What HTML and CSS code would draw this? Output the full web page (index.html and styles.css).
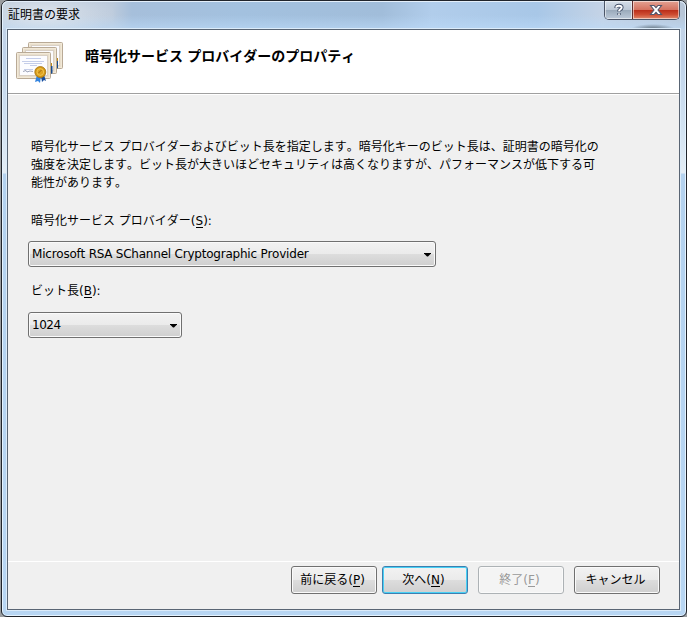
FILE: index.html
```
<!DOCTYPE html>
<html lang="ja">
<head>
<meta charset="utf-8">
<title>証明書の要求</title>
<link rel="stylesheet" href="styles.css">
</head>
<body>
<div class="window">
  <div class="titlebar">
    <div class="title">証明書の要求</div>
    <div class="controls">
      <div class="control help">
        <svg width="14" height="14" viewBox="0 0 14 14"><path d="M4.3 5V4.3Q4.3 2.7 7 2.7T9.7 4.5Q9.7 5.6 8.3 6.3Q7 7 7 8.4M7 10.2V11.8" fill="none" stroke="#46536b" stroke-width="3.8"/><path d="M4.3 4.8V4.3Q4.3 2.7 7 2.7T9.7 4.5Q9.7 5.6 8.3 6.3Q7 7 7 8.2M7 10.4V11.8" fill="none" stroke="#fff" stroke-width="1.9"/></svg>
      </div>
      <div class="control close">
        <svg width="14" height="12" viewBox="0 0 14 12"><path d="M1.5 1.5H5L7 3.7 9 1.5H12.5L9 6 12.5 10.5H9L7 8.3 5 10.5H1.5L5 6Z" fill="#fff" stroke="#53566b" stroke-width="1.1"/></svg>
      </div>
    </div>
  </div>
  <div class="client">
    <header class="header">
      <svg class="certs" width="48" height="44" viewBox="0 0 48 44">
        <defs>
          <g id="sheet">
            <rect x=".5" y=".5" width="34" height="26" rx="1" fill="#e9dfcc" stroke="#b9aa96"/>
            <rect x="1.5" y="1.5" width="32" height="24" fill="none" stroke="#faf3e5" stroke-dasharray="1 1"/>
            <rect x="3.5" y="3.5" width="28" height="20" fill="#fcfcff" stroke="#d9d0c5"/>
          </g>
          <g id="tails"><path d="M21 24L19 31 22 30 24 32 25 25Z" fill="#3283df"/><path d="M25 25L26 31 28 29 30 30 28 24Z" fill="#164d9e"/></g>
        </defs>
        <use href="#sheet" x="12" y="1"/>
        <path d="M40.5 19H42V27L40.5 28Z" fill="#174a8d"/>
        <use href="#sheet" x="6" y="6"/>
        <path d="M35 25H36.5V32L35 33Z" fill="#174a8d"/><path d="M35 22H36V25H35ZM41 17H42V20H41Z" fill="#bc891c"/>
        <use href="#sheet" x="0" y="11"/>
        <path d="M10 17.5H25M6 20.5H28M8 22.5H26M14 24.5H21M8 28.5H17" stroke="#9aa9d9" stroke-width=".7" opacity=".8"/>
        <path d="M7 30.5L10 29.5 11 31 14 30 17 30.5" fill="none" stroke="#77809b" stroke-width=".7"/>
        <use href="#tails" y="10"/>
        <circle cx="24.3" cy="31" r="5.5" fill="#d39918" stroke="#a8720b" stroke-width=".8"/>
        <circle cx="24.3" cy="31" r="3.4" fill="#dfa321" stroke="#f6cd5a" stroke-width=".8"/>
        <path d="M22.5 32L25.5 29" stroke="#9e6a0d"/>
      </svg>
      <h1>暗号化サービス プロバイダーのプロパティ</h1>
    </header>
    <main class="content">
      <p class="description">暗号化サービス プロバイダーおよびビット長を指定します。暗号化キーのビット長は、証明書の暗号化の<br>強度を決定します。ビット長が大きいほどセキュリティは高くなりますが、パフォーマンスが低下する可<br>能性があります。</p>
      <div class="label provider-label">暗号化サービス プロバイダー(<u>S</u>):</div>
      <div class="select provider"><span class="provider-value">Microsoft RSA SChannel Cryptographic Provider</span><i class="arrow"></i></div>
      <div class="label length-label">ビット長(<u>B</u>):</div>
      <div class="select length"><span class="length-value">1024</span><i class="arrow"></i></div>
    </main>
    <footer class="footer">
      <div class="button"><span>前に戻る(<u>P</u>)</span></div>
      <div class="button default"><span>次へ(<u>N</u>)</span></div>
      <div class="button disabled"><span>終了(<u>F</u>)</span></div>
      <div class="button"><span>キャンセル</span></div>
    </footer>
  </div>
</div>
</body>
</html>
```
FILE: styles.css
```
* { box-sizing: border-box; }
body {
  margin: 0;
  width: 687px;
  height: 617px;
  overflow: hidden;
  background: #9a9da0;
  color: #000;
  font: 12px/18px "DejaVu Sans", "Noto Sans CJK JP", sans-serif;
  font-kerning: none;
}
.window {
  width: 686px;
  height: 617px;
  margin-left: 1px;
  padding: 0 5px 5px;
  border: 1px solid #20242b;
  border-radius: 7px 7px 6px 6px;
  box-shadow: inset 0 0 0 1px #e5f3ff;
  background: linear-gradient(#c4d2e3 0, #c0d4eb 60px, #d3e3f2 130px, #e4edf5 172px, #b4d2ef 173px, #b8d6f3 100%);
}
.titlebar {
  display: flex;
  justify-content: space-between;
  height: 28px;
  margin: 0 -5px;
  padding: 0 6px;
  border-radius: 6px 6px 0 0;
  box-shadow: inset 0 1px #e4effa, inset 1px 0 #e5f3ff, inset -1px 0 #e5f3ff;
  background:
    radial-gradient(ellipse 22px 5px at 651px 28px, #62717d, transparent),
    radial-gradient(ellipse 75px 24px at 40px 13px, #e8edf3cc, transparent),
    linear-gradient(transparent 50%, #bddcfa99),
    linear-gradient(90deg, #b9c8d8 0, #bdcbdc 110px, #a6bfdb 130px, #a3c1df 240px, #a1bdda 380px, #b1cdeb 430px, #a8c7e7 535px, #c4d3e6 600px, #b7c5d6 100%);
}
.title { padding: 4px 0 0; font-family: "Noto Sans CJK JP", sans-serif; }
.controls {
  display: flex;
  width: 76px;
  height: 19px;
  border: 1px solid #4c5668;
  border-top: 0;
  border-radius: 0 0 5px 5px;
  overflow: hidden;
}
.control {
  display: flex;
  align-items: center;
  justify-content: center;
  box-shadow: inset 0 0 0 1px #ffffff88;
}
.help { width: 27px; background: linear-gradient(#d5dee9, #bdc9d7 48%, #99a9ba 50%, #bdcad9); }
.close { flex: 1; border-left: 1px solid #622d2d; background: linear-gradient(#e3a293, #d57361 48%, #b92c18 50%, #cd4c32 75%, #e18b6e); }
.client {
  display: flex;
  flex-direction: column;
  width: 673px;
  height: 581px;
  border: 1px solid #596574;
  outline: 1px solid #dcecfa;
  background: #f0f0f0;
}
.header {
  display: flex;
  height: 64px;
  padding: 11px 0 0 8px;
  background: #fff;
  border-bottom: 1px solid #a0a0a0;
  box-shadow: 0 1px #fff;
}
h1 { margin: 5px 0 0 21px; font: bold 14px/18px "Noto Sans CJK JP", sans-serif; font-kerning: none; word-spacing: 1px; white-space: nowrap; }
.content { flex: 1; padding: 44px 0 0 20px; }
.description { margin: 0 0 0 3px; line-height: 18px; white-space: nowrap; }
.label { margin-left: 3px; height: 18px; }
.provider-label { margin-top: 20px; }
.length-label { margin-top: 15px; }
u { text-decoration: none; border-bottom: 1px solid currentColor; display: inline-block; line-height: 12px; }
.select {
  display: flex;
  align-items: center;
  justify-content: space-between;
  height: 26px;
  padding: 0 4px 1px 3px;
  border: 1px solid #707070;
  border-radius: 3px;
  background: linear-gradient(#f2f2f2 0, #ebebeb 48%, #dddddd 50%, #cfcfcf 100%);
  box-shadow: inset 0 0 0 1px #fafafa;
}
.provider-value { letter-spacing: -.22px; }
.length-value { letter-spacing: -.5px; }
.provider { width: 408px; margin-top: 11px; }
.length { width: 154px; margin-top: 12px; }
.arrow { width: 7px; height: 4px; margin-top: 2px; background: #000; clip-path: polygon(0 0, 100% 0, 100% 1px, 4px 4px, 3px 4px, 0 1px); }
.footer {
  display: flex;
  height: 48px;
  padding: 4px 19px 0 0;
  justify-content: flex-end;
  border-top: 1px solid #fff;
  gap: 10px;
}
.button {
  display: flex;
  justify-content: center;
  width: 86px;
  height: 28px;
  padding: 4px 3px 0 0;
  border: 1px solid #707070;
  border-radius: 3px;
  background: linear-gradient(#f2f2f2 0, #ebebeb 48%, #dddddd 50%, #cfcfcf 100%);
  box-shadow: inset 0 0 0 1px #fafafa;
}
.button:first-child { margin-right: -5px; }
.default { border-color: #3c7fb1; box-shadow: inset 0 0 0 1px #48d1f5; }
.disabled { color: #999; border-color: #adb2b5; background: #f4f4f4; }
```
